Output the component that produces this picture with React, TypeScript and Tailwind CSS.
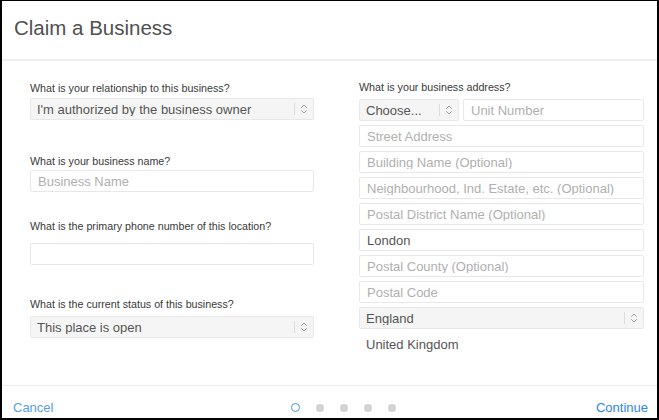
import React from "react";

const font = { fontFamily: '"Liberation Sans", Arial, sans-serif' };

function Chevrons() {
  return (
    <svg width="8" height="12" viewBox="0 0 8 12" fill="none" stroke="#a0a0a0" strokeWidth="1" strokeLinecap="round" strokeLinejoin="round">
      <path d="M1.5 4.5 L4 2 L6.5 4.5" />
      <path d="M1.5 7.5 L4 10 L6.5 7.5" />
    </svg>
  );
}

function Select({ value, className = "" }: { value: string; className?: string }) {
  return (
    <div className={`h-[22px] flex items-center bg-[#f5f5f5] border border-[#e8e8e8] rounded-[2px] ${className}`}>
      <span className="flex-1 pl-[6px] text-[13px] text-[#555] leading-none truncate">{value}</span>
      <div className="w-px h-[12px] bg-[#dcdcdc]" />
      <div className="w-[18px] flex justify-center"><Chevrons /></div>
    </div>
  );
}

function Input({ placeholder, value, className = "" }: { placeholder?: string; value?: string; className?: string }) {
  return (
    <div className={`h-[22px] flex items-center bg-white border border-[#e8e8e8] rounded-[2px] pl-[7px] ${className}`}>
      <span className={`text-[13px] leading-none truncate ${value ? "text-[#555]" : "text-[#b0b0b0]"}`}>{value ?? placeholder}</span>
    </div>
  );
}

function Label({ children, className = "" }: { children: React.ReactNode; className?: string }) {
  return <div className={`text-[10.7px] text-[#3a3a3a] leading-none h-[10px] whitespace-nowrap ${className}`}>{children}</div>;
}

export default function App() {
  return (
    <div style={font} className="w-[659px] h-[420px] bg-white border-l-2 border-t border-r-2 border-b-2 border-black flex flex-col overflow-hidden">
      <div className="h-[58px] pl-[12px] pt-[17px]">
        <h1 className="text-[20.5px] text-[#505050] font-normal leading-none">Claim a Business</h1>
      </div>
      <div className="h-[2px] bg-[#efefef]" />
      <div className="flex-1 flex pl-[28px] pr-[13px]">
        <div className="w-[284px] flex flex-col pt-[22px]">
          <Label>What is your relationship to this business?</Label>
          <Select className="mt-[5px]" value="I'm authorized by the business owner" />
          <Label className="mt-[36px]">What is your business name?</Label>
          <Input className="mt-[4px]" placeholder="Business Name" />
          <Label className="mt-[29px]">What is the primary phone number of this location?</Label>
          <Input className="mt-[12px]" />
          <Label className="mt-[34px]">What is the current status of this business?</Label>
          <Select className="mt-[7px]" value="This place is open" />
        </div>
        <div className="w-[285px] ml-[45px] flex flex-col pt-[21px]">
          <Label>What is your business address?</Label>
          <div className="flex gap-[4px] mt-[7px]">
            <Select className="w-[100px]" value="Choose..." />
            <Input className="flex-1" placeholder="Unit Number" />
          </div>
          <div className="flex flex-col gap-[4px] mt-[4px]">
            <Input placeholder="Street Address" />
            <Input placeholder="Building Name (Optional)" />
            <Input placeholder="Neighbourhood, Ind. Estate, etc. (Optional)" />
            <Input placeholder="Postal District Name (Optional)" />
            <Input value="London" />
            <Input placeholder="Postal County (Optional)" />
            <Input placeholder="Postal Code" />
            <Select value="England" />
          </div>
          <div className="mt-[9px] pl-[7px] text-[13px] text-[#555] leading-none">United Kingdom</div>
        </div>
      </div>
      <div className="h-px bg-[#ececec]" />
      <div className="h-[32px] flex items-center pt-[11px] pl-[11px] pr-[9px]">
        <div className="flex-1 flex items-center">
          <span className="text-[13px] leading-none text-[#5a9ee6]">Cancel</span>
        </div>
        <div className="flex items-center gap-[16px] ml-[25px]">
          <span className="w-[9px] h-[9px] rounded-full border border-[#4a90e2]" />
          <span className="w-[8px] h-[8px] rounded-full bg-[#d2d2d2]" />
          <span className="w-[8px] h-[8px] rounded-full bg-[#d2d2d2]" />
          <span className="w-[8px] h-[8px] rounded-full bg-[#d2d2d2]" />
          <span className="w-[8px] h-[8px] rounded-full bg-[#d2d2d2]" />
        </div>
        <div className="flex-1 flex items-center justify-end">
          <span className="text-[13px] leading-none text-[#2f86e8]">Continue</span>
        </div>
      </div>
    </div>
  );
}
